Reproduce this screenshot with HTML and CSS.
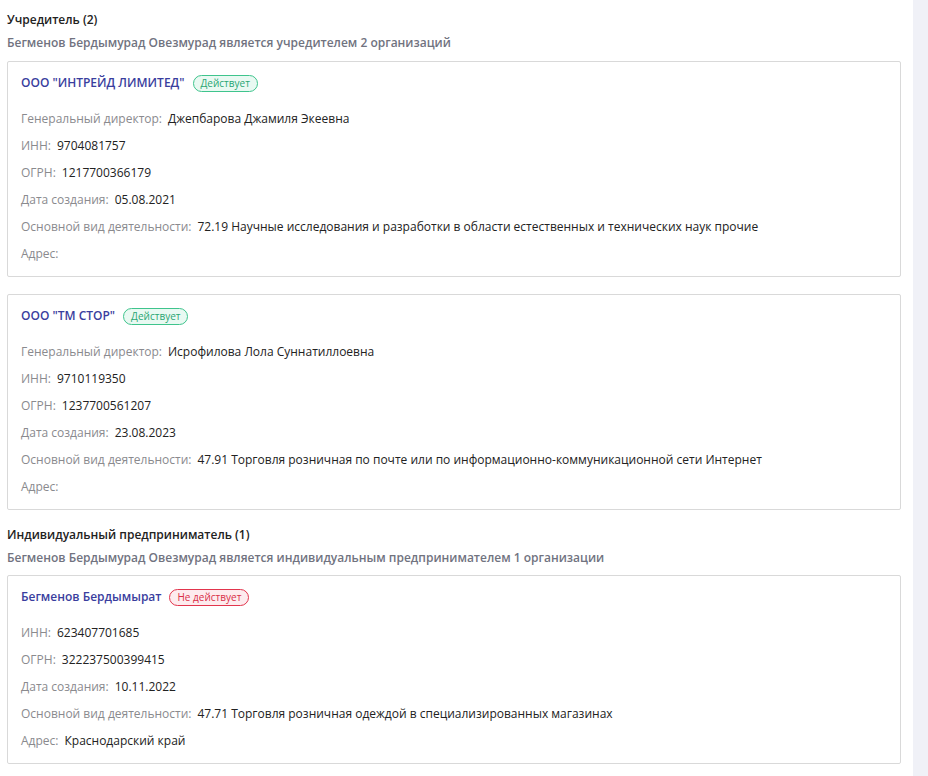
FILE: index.html
```html
<!DOCTYPE html>
<html lang="ru">
<head>
<meta charset="utf-8">
<title>Связи</title>
<link rel="stylesheet" href="styles.css">
</head>
<body>
<div class="layout">
  <main class="content">
    <section class="section">
      <h2 class="section-title">Учредитель (2)</h2>
      <p class="section-sub">Бегменов Бердымурад Овезмурад является учредителем 2 организаций</p>

      <div class="card">
        <div class="card-head">
          <a class="card-title">ООО "ИНТРЕЙД ЛИМИТЕД"</a>
          <span class="badge badge-ok">Действует</span>
        </div>
        <div class="rows">
          <div class="row"><span class="label">Генеральный директор:</span><span class="value">Джепбарова Джамиля Экеевна</span></div>
          <div class="row"><span class="label">ИНН:</span><span class="value">9704081757</span></div>
          <div class="row"><span class="label">ОГРН:</span><span class="value">1217700366179</span></div>
          <div class="row"><span class="label">Дата создания:</span><span class="value">05.08.2021</span></div>
          <div class="row"><span class="label">Основной вид деятельности:</span><span class="value">72.19 Научные исследования и разработки в области естественных и технических наук прочие</span></div>
          <div class="row"><span class="label">Адрес:</span><span class="value"></span></div>
        </div>
      </div>

      <div class="card">
        <div class="card-head">
          <a class="card-title">ООО "ТМ СТОР"</a>
          <span class="badge badge-ok">Действует</span>
        </div>
        <div class="rows">
          <div class="row"><span class="label">Генеральный директор:</span><span class="value">Исрофилова Лола Суннатиллоевна</span></div>
          <div class="row"><span class="label">ИНН:</span><span class="value">9710119350</span></div>
          <div class="row"><span class="label">ОГРН:</span><span class="value">1237700561207</span></div>
          <div class="row"><span class="label">Дата создания:</span><span class="value">23.08.2023</span></div>
          <div class="row"><span class="label">Основной вид деятельности:</span><span class="value">47.91 Торговля розничная по почте или по информационно-коммуникационной сети Интернет</span></div>
          <div class="row"><span class="label">Адрес:</span><span class="value"></span></div>
        </div>
      </div>
    </section>

    <section class="section">
      <h2 class="section-title">Индивидуальный предприниматель (1)</h2>
      <p class="section-sub">Бегменов Бердымурад Овезмурад является индивидуальным предпринимателем 1 организации</p>

      <div class="card">
        <div class="card-head">
          <a class="card-title">Бегменов Бердымырат</a>
          <span class="badge badge-off">Не действует</span>
        </div>
        <div class="rows">
          <div class="row"><span class="label">ИНН:</span><span class="value">623407701685</span></div>
          <div class="row"><span class="label">ОГРН:</span><span class="value">322237500399415</span></div>
          <div class="row"><span class="label">Дата создания:</span><span class="value">10.11.2022</span></div>
          <div class="row"><span class="label">Основной вид деятельности:</span><span class="value">47.71 Торговля розничная одеждой в специализированных магазинах</span></div>
          <div class="row"><span class="label">Адрес:</span><span class="value">Краснодарский край</span></div>
        </div>
      </div>
    </section>
  </main>
  <aside class="rail"></aside>
</div>
</body>
</html>
```

FILE: styles.css
```css
* { box-sizing: border-box; }

html, body {
  margin: 0;
  padding: 0;
  background: #ffffff;
  font-family: "Open Sans", "Liberation Sans", sans-serif;
  font-size: 12px;
  color: #222222;
}

.layout {
  display: flex;
  min-height: 776px;
}

.content {
  width: 913px;
  padding: 12px 12px 0 7px;
}

.rail {
  flex: 1;
  background: #f0f1f7;
}

.section {
  display: flex;
  flex-direction: column;
}

.section + .section {
  margin-top: 17px;
}

.section + .section .section-sub {
  margin-bottom: 9px;
}

.section-title {
  margin: 0;
  font-size: 12px;
  line-height: 16px;
  font-weight: 600;
  color: #222222;
}

.section-sub {
  margin: 7px 0 10px;
  font-size: 12px;
  line-height: 16px;
  font-weight: 600;
  color: #71737f;
}

.card {
  border: 1px solid #d9d9d9;
  border-radius: 2px;
  padding: 12px 13px 14px;
  background: #fff;
}

.card + .card {
  margin-top: 17px;
}

.card-head {
  display: flex;
  align-items: center;
  gap: 8px;
  height: 18px;
}

.card-title {
  font-weight: 600;
  color: #3a3e9e;
  line-height: 18px;
}

.badge {
  display: inline-flex;
  align-items: center;
  height: 17px;
  padding: 0 7px;
  border-radius: 9px;
  font-size: 10px;
  line-height: 1;
  border: 1px solid;
}

.badge-ok {
  border-color: #3fc48d;
  background: #e9f9f2;
  color: #2aa672;
}

.badge-off {
  border-color: #e2354d;
  background: #fdebee;
  color: #d92e47;
}

.rows {
  margin-top: 19px;
  display: flex;
  flex-direction: column;
  gap: 11px;
}

.row {
  line-height: 16px;
  display: flex;
  gap: 6px;
}

.label {
  color: #8a8a8e;
}

.value {
  color: #222222;
}
```
